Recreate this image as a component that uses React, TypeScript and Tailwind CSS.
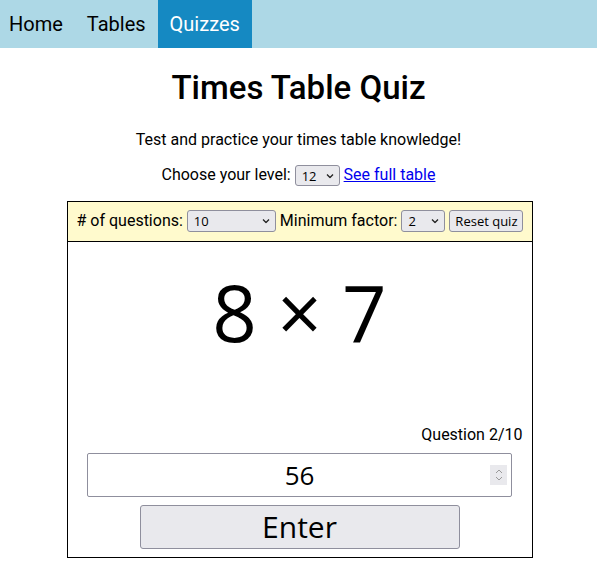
import { useState } from "react";

function Chevron() {
  return (
    <svg className="pointer-events-none absolute right-[6px] top-1/2 -translate-y-1/2" width="8" height="5" viewBox="0 0 8 5" aria-hidden>
      <path d="M1 1l3 3 3-3" fill="none" stroke="#222" strokeWidth="1.3" />
    </svg>
  );
}

function Select({ value, options, className }: { value: string; options: string[]; className: string }) {
  const [v, setV] = useState(value);
  return (
    <span className="relative inline-block shrink-0 align-middle">
      <select
        value={v}
        onChange={(e) => setV(e.target.value)}
        className={`appearance-none rounded-[3px] border border-[#8f8f9d] bg-[#e9e9ed] pl-[6px] text-[13px] leading-[18px] text-black outline-none [font-family:'Open_Sans',sans-serif] ${className}`}
      >
        {options.map((o) => (
          <option key={o}>{o}</option>
        ))}
      </select>
      <Chevron />
    </span>
  );
}

export default function App() {
  const [answer, setAnswer] = useState("56");
  return (
    <div className="min-h-screen bg-white text-black [font-family:Roboto,sans-serif]">
      <nav className="flex h-12 bg-[#add8e6] text-[20px]">
        <a className="flex items-center pl-[9px] pr-3">Home</a>
        <a className="flex items-center px-3">Tables</a>
        <a className="flex items-center bg-[#1589c2] px-[12px] text-white">Quizzes</a>
      </nav>

      <h1 className="mt-[21px] text-center text-[33px] font-medium leading-[38px]">Times Table Quiz</h1>
      <p className="mt-[23px] text-center text-[16px] leading-[20px]">Test and practice your times table knowledge!</p>
      <p className="mt-[14px] text-center text-[16px] leading-[22px]">
        Choose your level:{" "}
        <Select value="12" options={["10", "11", "12"]} className="h-[21px] w-[45px]" />{" "}
        <a href="#" className="text-[#0000ee] underline">See full table</a>
      </p>

      <div className="mx-auto mt-[14px] w-[466px] translate-x-[1px] border border-black">
        <div className="flex h-[40px] items-center gap-[4px] whitespace-nowrap border-b border-black bg-[#fffacd] px-[9px] text-[16px]">
          <span className="shrink-0"># of questions:</span>
          <Select value="10" options={["5", "10", "20"]} className="h-[22px] w-[89px]" />
          <span className="shrink-0">Minimum factor:</span>
          <Select value="2" options={["1", "2", "3"]} className="h-[22px] w-[44px]" />
          <button className="h-[22px] w-[74px] shrink-0 rounded-[3px] border border-[#8f8f9d] bg-[#e9e9ed] text-[13px] [font-family:'Open_Sans',sans-serif]">
            Reset quiz
          </button>
        </div>

        <div className="flex h-[110px] items-end justify-center text-[78px] leading-[80px] [font-family:'Open_Sans',sans-serif]">
          8 × 7
        </div>

        <div className="mt-[73px] pr-[9px] text-right text-[16px] leading-[20px]">Question 2/10</div>

        <div className="relative mx-auto mt-[8px] w-[425px]">
          <input
            value={answer}
            onChange={(e) => setAnswer(e.target.value)}
            className="h-[44px] w-full rounded-[2px] border border-[#8f8f9d] text-center text-[26px] outline-none [font-family:'Open_Sans',sans-serif]"
          />
          <span className="pointer-events-none absolute right-[5px] top-1/2 flex h-[20px] w-[17px] -translate-y-1/2 flex-col items-center justify-center gap-[2px] bg-[#e9e9ed]">
            <svg width="8" height="5" viewBox="0 0 8 5"><path d="M1 4l3-3 3 3" fill="none" stroke="#999" strokeWidth="1" /></svg>
            <svg width="8" height="5" viewBox="0 0 8 5"><path d="M1 1l3 3 3-3" fill="none" stroke="#999" strokeWidth="1" /></svg>
          </span>
        </div>

        <div className="mb-[8px] mt-[8px] flex justify-center">
          <button className="h-[44px] w-[320px] rounded-[3px] border border-[#8f8f9d] bg-[#e9e9ed] text-[30px] leading-[40px] [font-family:'Open_Sans',sans-serif]">
            Enter
          </button>
        </div>
      </div>
    </div>
  );
}
